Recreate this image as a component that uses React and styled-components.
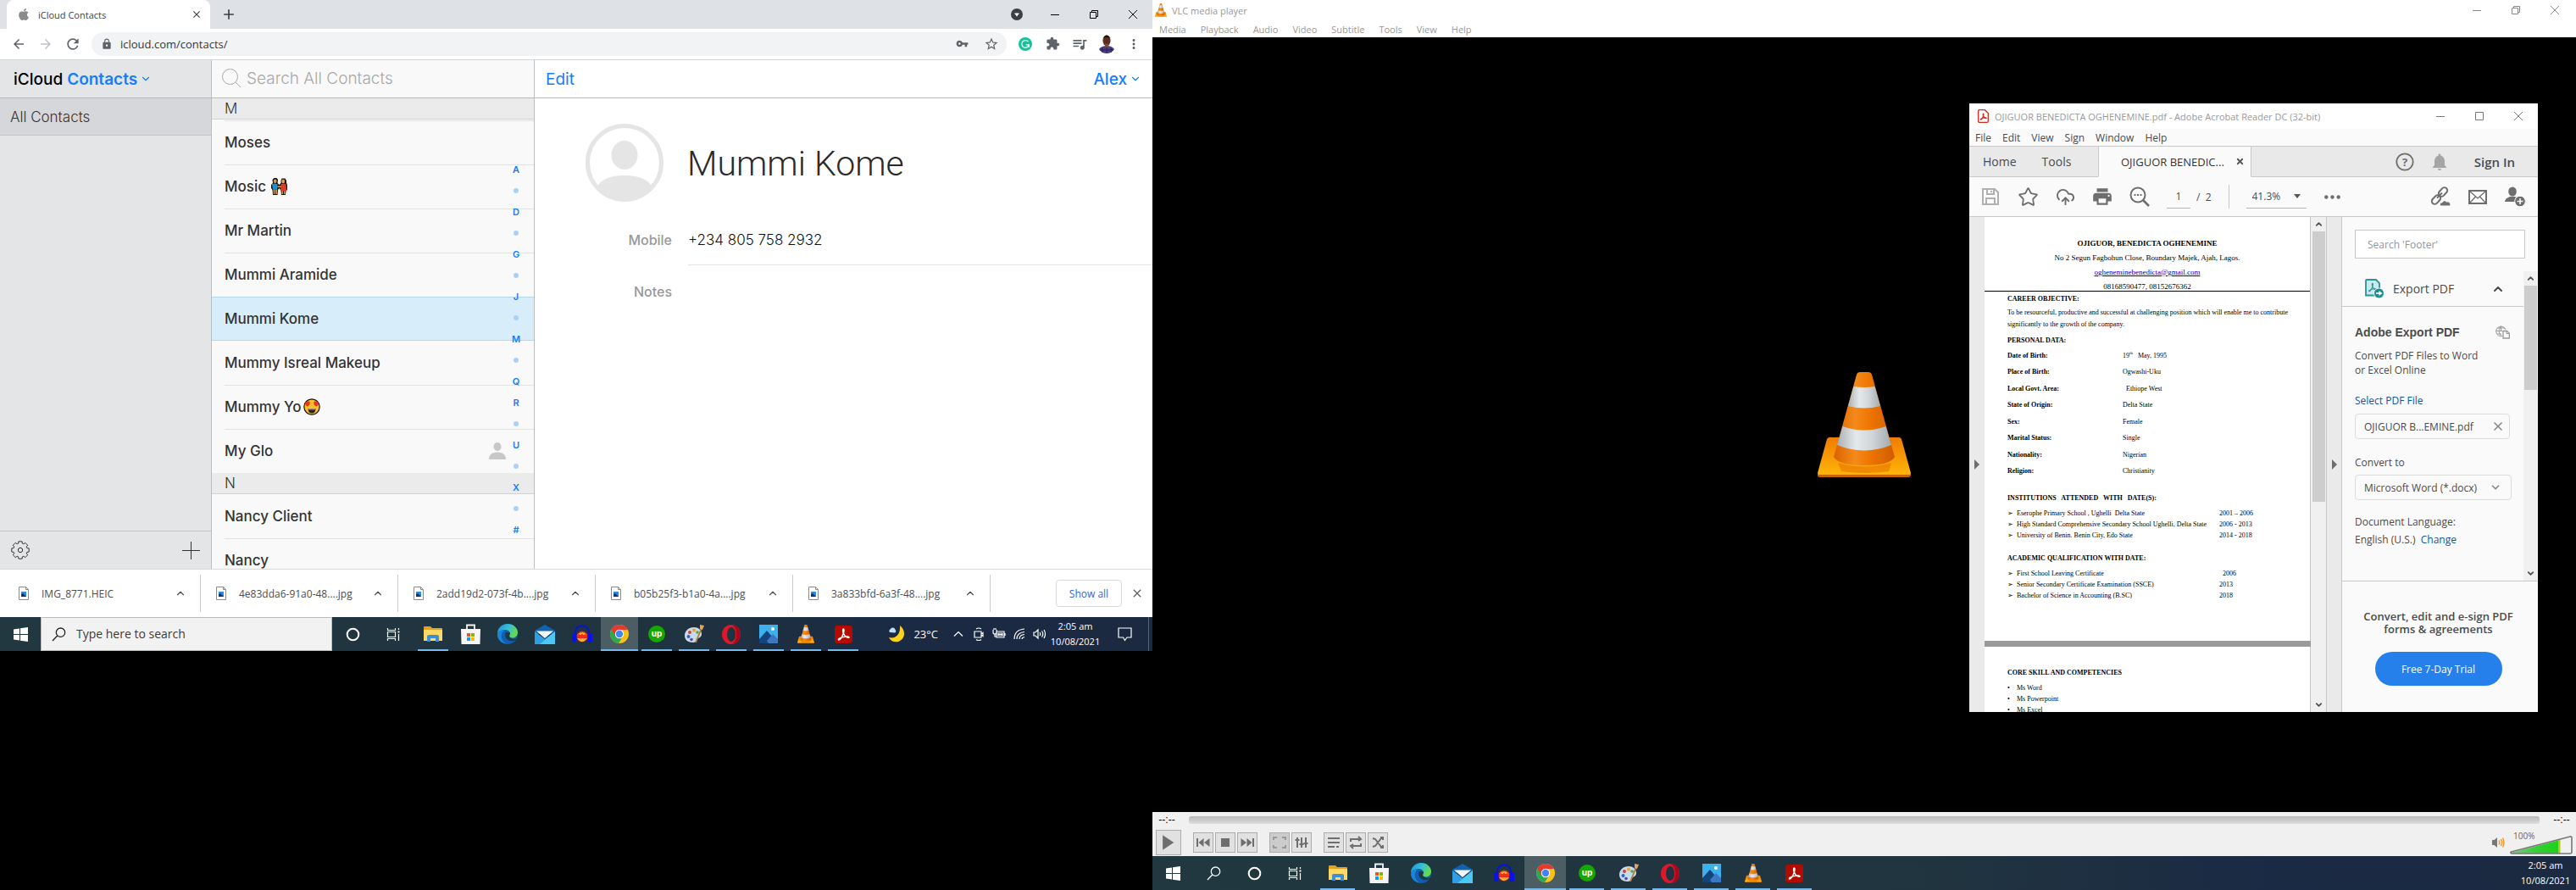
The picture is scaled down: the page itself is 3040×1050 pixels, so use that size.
import React from "react";
import styled, { createGlobalStyle, css } from "styled-components";
import {
  MdArrowBack, MdArrowForward, MdRefresh, MdLock, MdVpnKey, MdStarBorder,
  MdExtension, MdQueueMusic, MdMoreVert, MdClose, MdAdd, MdPrint, MdNotifications,
} from "react-icons/md";
import { FaApple } from "react-icons/fa";
import { ChevronUp, ChevronDown, Star, CloudUpload, X } from "lucide-react";

const UI = `"Open Sans", "Noto Sans", sans-serif`;
const SF = `Inter, Roboto, sans-serif`;
const SERIF = `"Liberation Serif", serif`;

const GlobalStyle = createGlobalStyle`
  *, *::before, *::after { box-sizing: border-box; }
  body { margin: 0; background: #000; font-family: ${UI}; }
  button, input, select { font: inherit; color: inherit; background: none; border: 0; padding: 0; margin: 0; border-radius: 0; outline: 0; }
  button { cursor: pointer; }
  h1, h2, h3, p, ul, table { margin: 0; padding: 0; }
  ul { list-style: none; }
  svg { display: block; flex: none; }
`;

/* ---------- shared ---------- */

const Desktop = styled.main`
  display: grid;
  grid-template-columns: 1360fr 1680fr;
  align-items: start;
  background: #000;
  min-height: 100vh;
`;

const Monitor = styled.section`
  display: flex;
  flex-direction: column;
  min-width: 0;
  overflow: hidden;
  aspect-ratio: ${(p) => p.$ratio};
`;

const IconButton = styled.button`
  display: flex;
  align-items: center;
  justify-content: center;
  width: ${(p) => p.$w || 32}px;
  height: ${(p) => p.$h || 28}px;
  flex: none;
  color: ${(p) => p.$color || "#5f6368"};
`;

const Spacer = styled.span`
  flex: 1;
`;

const Row = styled.div`
  display: flex;
  align-items: center;
  gap: ${(p) => p.$gap || 0}px;
`;

/* ---------- drawings ---------- */

const Cone = ({ w, h }) => (
  <svg width={w} height={h} viewBox="0 0 110 124" preserveAspectRatio="none" aria-hidden="true">
    <defs>
      <linearGradient id="coneBase" x1="0" y1="0" x2="0" y2="1">
        <stop offset="0" stopColor="#f07c00" />
        <stop offset="1" stopColor="#ffb50a" />
      </linearGradient>
      <linearGradient id="coneBody" x1="0" y1="0" x2="1" y2="0">
        <stop offset="0" stopColor="#d86400" />
        <stop offset=".35" stopColor="#f58a1c" />
        <stop offset=".6" stopColor="#ef7500" />
        <stop offset="1" stopColor="#cf5c00" />
      </linearGradient>
      <linearGradient id="coneBand" x1="0" y1="0" x2="1" y2="0">
        <stop offset="0" stopColor="#a9b0b3" />
        <stop offset=".35" stopColor="#e6e9ea" />
        <stop offset=".65" stopColor="#d0d5d7" />
        <stop offset="1" stopColor="#a2a9ad" />
      </linearGradient>
    </defs>
    <path d="M0 120 L110 120 L110 122 Q109 124 107 124 L3 124 Q0 124 0 122Z" fill="#c96500" />
    <path d="M14 77 L96 77 Q98 77 99 79 L110 119 Q110 121 108 121 L2 121 Q0 121 0 119 L11 79 Q12 77 14 77Z" fill="url(#coneBase)" />
    <path d="M24 107 Q55 116 87 107 L84 117 Q55 121 28 117Z" fill="#e87a00" opacity=".7" />
    <path d="M50 0 L60 0 Q63 0 64 3 L91 100 Q86 110 55 110 Q24 110 19 100 L46 3 Q47 0 50 0Z" fill="url(#coneBody)" />
    <path d="M42.500 17 Q55 19 67.500 17 L74 40 Q55 45 36 40Z" fill="url(#coneBand)" />
    <path d="M29.500 64 Q55 73 80.500 64 L87 86 Q55 99 23 86Z" fill="url(#coneBand)" />
  </svg>
);

const WindowsLogo = () => (
  <svg width="17" height="17" viewBox="0 0 17 17" fill="#fff" aria-hidden="true">
    <path d="M0 2.400L7 1.400V8H0zM8 1.300L17 0v8H8zM0 9h7v6.600L0 14.600zM8 9h9v8l-9-1.300z" />
  </svg>
);

const Magnifier = ({ size = 17, color = "#222" }) => (
  <svg width={size} height={size} viewBox="0 0 17 17" fill="none" stroke={color} strokeWidth="1.300" aria-hidden="true">
    <circle cx="10.500" cy="6.200" r="5.200" />
    <path d="M6.700 10L1 16" />
  </svg>
);

const Cortana = () => (
  <svg width="17" height="17" viewBox="0 0 17 17" aria-hidden="true">
    <circle cx="8.500" cy="8.500" r="6.800" fill="none" stroke="#fff" strokeWidth="2" />
  </svg>
);

const TaskView = () => (
  <svg width="17" height="17" viewBox="0 0 17 17" fill="none" stroke="#fff" strokeWidth="1.200" aria-hidden="true">
    <path d="M1.500 1v2.500h9V1M1.500 16v-2.500h9V16M1.500 5.500h9v6h-9zM14.500 1v2M14.500 8v8" />
    <path d="M13.500 4.500h2v2h-2z" fill="#fff" stroke="none" />
  </svg>
);

const Folder = () => (
  <svg width="22" height="20" viewBox="0 0 22 20" aria-hidden="true">
    <path d="M0 2q0-1 1-1h7l2 2h11q1 0 1 1v3H0z" fill="#e6a21c" />
    <path d="M0 5h22v13H0z" fill="#ffd968" />
    <path d="M4 19v-6q0-2 2-2h10q2 0 2 2v6h-4v-4H8v4z" fill="#3c8fd4" />
  </svg>
);

const StoreBag = () => (
  <svg width="23" height="24" viewBox="0 0 23 24" aria-hidden="true">
    <path d="M7 7V1.500h9V7" fill="none" stroke="#f3f3f3" strokeWidth="1.800" />
    <path d="M0 6h23l-.5 18H.5z" fill="#f5f5f5" />
    <path d="M7 11h4v4H7z" fill="#f25022" />
    <path d="M12 11h4v4h-4z" fill="#7fba00" />
    <path d="M7 16h4v4H7z" fill="#00a4ef" />
    <path d="M12 16h4v4h-4z" fill="#ffb900" />
  </svg>
);

const EdgeLogo = () => (
  <svg width="24" height="24" viewBox="0 0 24 24" aria-hidden="true">
    <defs>
      <linearGradient id="edgeTop" x1="0" y1="0" x2="1" y2=".4">
        <stop offset="0" stopColor="#1b8fdc" />
        <stop offset=".55" stopColor="#35c1d8" />
        <stop offset="1" stopColor="#66d84e" />
      </linearGradient>
    </defs>
    <circle cx="12" cy="12" r="12" fill="#0f5fb4" />
    <path d="M0 12C0 5 5 0 12 0s12 5 12 10c0 4-3 6.500-6 6.500-2.500 0-4-1-4-2 0-.8 1-1 1-3C15 9 12.500 7 9 7c-5 0-9 3-9 5z" fill="url(#edgeTop)" />
    <path d="M8 8c-3 2-4 5-3 9 1 3 3 5.500 6 6.500C5 23 0 18.500 0 12.500 1 9 4 7 8 8z" fill="#1a86d9" />
    <path d="M10 10c-2 4 0 9 5 10 3 .6 5.500-.3 7.500-1.500l1.500-1.500c-3 1.500-10 1-10-3.500 0-1 1-1.500 1-3z" fill="#213840" />
  </svg>
);

const MailApp = () => (
  <svg width="24" height="24" viewBox="0 0 24 24" aria-hidden="true">
    <path d="M0 8L12 1l12 7v4H0z" fill="#0f63b0" />
    <path d="M0 9l12 9 12-9v15H0z" fill="#2f9fe3" />
    <path d="M24 9L6 24h18z" fill="#4bc8f4" />
    <path d="M2 8.500h20L12 17z" fill="#f2f6f9" />
  </svg>
);

const Audacity = () => (
  <svg width="24" height="22" viewBox="0 0 24 22" aria-hidden="true">
    <path d="M4 12C3 5 7 1.500 12 1.500S21 5 20 12" fill="none" stroke="#0a12d8" strokeWidth="2" />
    <circle cx="12" cy="14" r="6.500" fill="#e8281a" />
    <path d="M6 12q6-6 12 0zM6 16q6 8 12 0z" fill="#f6b53a" />
    <path d="M6 14l2-2 2 3 2-3 2 3 2-3 2 2" fill="none" stroke="#ff2a12" strokeWidth="2" />
    <rect x="0" y="10" width="5.500" height="11" rx="2.700" fill="#0a10f0" />
    <rect x="18.500" y="10" width="5.500" height="11" rx="2.700" fill="#0a10f0" />
  </svg>
);

const ChromeLogo = () => (
  <svg width="22" height="22" viewBox="0 0 22 22" aria-hidden="true">
    <circle cx="11" cy="11" r="11" fill="#fbc116" />
    <path d="M1.500 5.500A11 11 0 0 0 10 22L15.500 13 11 11z" fill="#2da94f" />
    <path d="M1.500 5.500L6.200 13.500 11 11V6h9.700A11 11 0 0 0 1.500 5.500z" fill="#e33b2e" />
    <circle cx="11" cy="11" r="5.200" fill="#fff" />
    <circle cx="11" cy="11" r="4.200" fill="#4285f4" />
  </svg>
);

const Upwork = () => (
  <svg width="20" height="20" viewBox="0 0 20 20" aria-hidden="true">
    <circle cx="10" cy="10" r="10" fill="#14a800" />
    <text x="10" y="13" textAnchor="middle" fontFamily="Inter, sans-serif" fontWeight="700" fontSize="10" fill="#fff">up</text>
  </svg>
);

const Palette = () => (
  <svg width="24" height="24" viewBox="0 0 24 24" aria-hidden="true">
    <path d="M1 14C1 8 6 4 12 4c5 0 9 3 9 8 0 3-2 4-4 5s-1 5-6 5C5 22 1 19 1 14z" fill="#c6dcea" />
    <circle cx="7" cy="10" r="2" fill="#d84032" />
    <circle cx="12" cy="7.500" r="2" fill="#e9a23a" />
    <circle cx="16" cy="10" r="1.800" fill="#54a844" />
    <circle cx="5.500" cy="15" r="2" fill="#2d62c8" />
    <circle cx="9" cy="18.500" r="1.800" fill="#6a3da8" />
    <path d="M21 5l-7 17" stroke="#b9763c" strokeWidth="1.800" />
    <path d="M19 1l5 1-2 5-3-1z" fill="#dca466" />
  </svg>
);

const Opera = () => (
  <svg width="22" height="23" viewBox="0 0 22 23" aria-hidden="true">
    <ellipse cx="11" cy="11.500" rx="11" ry="11.500" fill="#e0162b" />
    <path d="M11 0c7 0 11 5 11 11.500S17 23 11 23c4-1 6-6 6-11.500S15 1 11 0z" fill="#a30a1c" />
    <ellipse cx="11" cy="11.500" rx="5" ry="8.500" fill="#1e3440" />
  </svg>
);

const Photos = () => (
  <svg width="22" height="22" viewBox="0 0 22 22" aria-hidden="true">
    <rect width="22" height="22" fill="#3db0ee" />
    <path d="M0 17L9 7l13 15H0z" fill="#15437c" />
    <path d="M9 19l7-8 6 6v5H11z" fill="#3c78c4" />
    <circle cx="16" cy="5" r="2" fill="#fff" />
  </svg>
);

const Trefoil = ({ color, width = 1.4 }) => (
  <path
    d="M4.500 16.200c1.500.6 4.300-4.200 5.400-7.700.8-2.600.8-4.600 0-4.600s-1.100 1.800-.2 4.300c1 2.600 3.400 5.500 5.700 5.500 1.300 0 1.200-1.200-.8-1.400-3-.2-8 1.200-9.600 2.400-.8.600-1 1.200-.5 1.500z"
    fill="none" stroke={color} strokeWidth={width} strokeLinejoin="round"
  />
);

const AcrobatApp = () => (
  <svg width="21" height="21" viewBox="0 0 20 20" aria-hidden="true">
    <rect width="20" height="20" rx="3" fill="#b30b00" />
    <Trefoil color="#fff" />
  </svg>
);

const AcrobatDoc = () => (
  <svg width="13" height="16" viewBox="0 0 13 16" aria-hidden="true">
    <path d="M2 .7h6.500l3.800 3.800V14q0 1.300-1.300 1.300H2Q.7 15.300.7 14V2Q.7.700 2 .7z" fill="#fff" stroke="#d7261c" strokeWidth="1.300" />
    <g transform="translate(.8 2.800) scale(.58)"><Trefoil color="#d7261c" width={2} /></g>
  </svg>
);

const ExportDoc = () => (
  <svg width="23" height="23" viewBox="0 0 23 23" aria-hidden="true">
    <path d="M2 1h11l4 4v14.500H1V2q0-1 1-1z" fill="#c9e9ea" stroke="#26949a" strokeWidth="1.800" />
    <g transform="translate(1.500 2.500) scale(.75)"><Trefoil color="#26949a" width={1.5} /></g>
    <circle cx="16.500" cy="17" r="6" fill="#1f8c92" stroke="#fafafa" />
    <path d="M13 17h5.500" stroke="#fff" strokeWidth="1.600" />
    <path d="M16.500 14l4 3-4 3z" fill="#fff" />
  </svg>
);

const GlobeDoc = () => (
  <svg width="17" height="16" viewBox="0 0 17 16" fill="none" stroke="#9a9a9a" aria-hidden="true">
    <path d="M8 12.500A5.800 5.800 0 1 1 12 5M.5 6.500h8M6.500.7c-3 3-3 8 0 11.500M6.500.7v6M2 3h9M2 10h5" />
    <path d="M9 6.500h4.500l2.800 2.800V15H9z" fill="#fafafa" strokeWidth="1.300" />
    <path d="M13 6.500v3h3" />
  </svg>
);

const MoonCloud = () => (
  <svg width="20" height="20" viewBox="0 0 20 20" aria-hidden="true">
    <path d="M14 0c7 5 7 16-2 19-5 1.300-9-1-11-5 8 2 14-4 13-14z" fill="#fbd21b" />
    <path d="M2 8a2.500 2.500 0 0 1 1-4 3 3 0 0 1 5.500 1A2 2 0 0 1 8 8.500z" fill="#b8dff5" />
  </svg>
);

const gearPoints = () => {
  const pts = [];
  for (let i = 0; i < 8; i += 1) {
    const a = (i * Math.PI) / 4;
    [[-0.3, 8.2], [-0.2, 10.4], [0.2, 10.4], [0.3, 8.2]].forEach(([d, r]) => {
      pts.push(`${(11 + r * Math.sin(a + d)).toFixed(2)},${(11 - r * Math.cos(a + d)).toFixed(2)}`);
    });
  }
  return pts.join(" ");
};

const Gear = () => (
  <svg width="22" height="22" viewBox="0 0 22 22" fill="none" stroke="#333" strokeLinejoin="round" aria-hidden="true">
    <polygon points={gearPoints()} />
    <circle cx="11" cy="11" r="2.700" />
  </svg>
);

const ThinPlus = () => (
  <svg width="21" height="21" viewBox="0 0 21 21" stroke="#333" aria-hidden="true">
    <path d="M10.500 0v21M0 10.500h21" />
  </svg>
);

const AvatarLarge = () => (
  <svg width="92" height="92" viewBox="0 0 92 92" role="img" aria-label="No photo">
    <circle cx="46" cy="46" r="43.500" fill="#fff" stroke="#e5e5e5" strokeWidth="5" />
    <ellipse cx="46" cy="37" rx="15.500" ry="17" fill="#e5e5e5" />
    <path d="M14 74C19 65 30 61 46 61s27 4 32 13C70 85 58 90 46 90S22 85 14 74z" fill="#e5e5e5" />
  </svg>
);

const PersonSmall = () => (
  <svg width="20" height="20" viewBox="0 0 20 20" fill="#c8c8c8" aria-hidden="true">
    <ellipse cx="10" cy="5" rx="4.500" ry="5" />
    <path d="M0 20c0-5 3-8.500 10-8.500S20 15 20 20z" />
  </svg>
);

const Couple = () => (
  <svg width="19" height="20" viewBox="0 0 19 20" role="img" aria-label="man and woman holding hands">
    <path d="M0 8l2-2-.5-4L3.500 0h3L8 2l-.5 4 2 2 2-2V3l1-2.500h4L18 3v3l1 2v6l-1.500 1L17 20h-5l-.5-5-2-3-1.500 2-.5 6H2l-.5-6L0 12z" fill="#1c120c" />
    <ellipse cx="4.700" cy="3.800" rx="1.900" ry="2.200" fill="#d99c52" />
    <ellipse cx="14.200" cy="4" rx="1.900" ry="2.200" fill="#e0a458" />
    <path d="M12.300 3q2-3 4 0v-1.500h-4z" fill="#a5471e" />
    <path d="M1 7.200Q4.500 6 7.500 7.200L7.200 13.500H2z" fill="#1f8ed6" />
    <path d="M11.500 7.200q3-1.200 6 0l.8 8h-7.300z" fill="#e03a24" />
    <path d="M7.500 9.500h4V11h-4z" fill="#e8ac2c" />
    <path d="M2.500 13.500h1.900v5.500H2.800zM5 13.500h1.900v5.500H5.300zM12.500 15.200H14V19h-1.500zM15 15.200h1.500V19H15z" fill="#dc9c3c" />
  </svg>
);

const HeartEyes = () => (
  <svg width="20" height="20" viewBox="0 0 20 20" role="img" aria-label="smiling face with heart-eyes">
    <circle cx="10" cy="10" r="9.200" fill="#fcbf2c" stroke="#1b1208" strokeWidth="1.200" />
    <path d="M2 6q0-2.500 2.300-1.700Q6.500 2.500 7.800 5q0 3-3 4.500Q2 8.500 2 6zM18 6q0-2.500-2.300-1.700Q13.500 2.500 12.200 5q0 3 3 4.500Q18 8.500 18 6z" fill="#e8331c" />
    <path d="M5.500 12h9q0 5.500-4.500 5.500T5.500 12z" fill="#33210f" />
    <path d="M6 12h8v1.500H6z" fill="#8d8d86" />
  </svg>
);

const Portrait = () => (
  <svg width="20" height="22" viewBox="0 0 20 22" role="img" aria-label="Profile">
    <path d="M1 17q3-4 9-4t9 4q-3 5-9 5t-9-5z" fill="#4b3f86" />
    <path d="M5 15v6M10 14v8M15 15v6M2 18h16" stroke="#221c48" strokeWidth=".8" />
    <ellipse cx="10" cy="7" rx="4.500" ry="6.500" fill="#5a2f22" />
    <path d="M5.500 4Q10-3 14.500 4 10 2 5.500 4z" fill="#1c0f0b" />
    <path d="M8 10q2 1.500 4 0v5H8z" fill="#7c4633" />
  </svg>
);

const Grammarly = () => (
  <svg width="16" height="16" viewBox="0 0 16 16" aria-hidden="true">
    <circle cx="8" cy="8" r="8" fill="#15c39a" />
    <path d="M11.500 5.200A4.300 4.300 0 1 0 12.300 9M12.300 12V8.800H8.800" fill="none" stroke="#fff" strokeWidth="1.300" />
  </svg>
);

const FileThumb = () => (
  <svg width="12" height="16" viewBox="0 0 12 16" aria-hidden="true">
    <path d="M.5.500h8l3 3v12H.5z" fill="#fff" stroke="#8c8c8c" />
    <path d="M8.500.5v3h3" fill="none" stroke="#8c8c8c" />
    <path d="M3 6h6v6H3z" fill="#2b8be0" />
    <path d="M3 12V9l2-1 4 4z" fill="#0c3768" />
  </svg>
);

const GlyphMin = ({ color = "#000", size = 10 }) => (
  <svg width={size} height="10" viewBox="0 0 10 10" stroke={color} aria-hidden="true"><path d="M0 5.500h10" /></svg>
);
const GlyphRestore = ({ color = "#000" }) => (
  <svg width="10" height="10" viewBox="0 0 10 10" fill="none" stroke={color} aria-hidden="true">
    <path d="M.5 2.500h7v7h-7zM2.500 2.500v-2h7v7h-2" />
  </svg>
);
const GlyphMax = ({ color = "#777" }) => (
  <svg width="10" height="10" viewBox="0 0 10 10" fill="none" stroke={color} aria-hidden="true"><path d="M.5.500h9v9h-9z" /></svg>
);
const GlyphClose = ({ color = "#000" }) => (
  <svg width="10" height="10" viewBox="0 0 10 10" fill="none" stroke={color} aria-hidden="true"><path d="M0 0l10 10M10 0L0 10" /></svg>
);

/* ---------- taskbar ---------- */

const Bar = styled.footer`
  display: flex;
  align-items: stretch;
  flex: none;
  height: 40px;
  background: linear-gradient(90deg, #213840, #20343f 55%, #1b2a44 78%, #1b2941);
  color: #fff;
`;

const Tile = styled.button`
  display: flex;
  align-items: center;
  justify-content: center;
  flex: none;
  width: ${(p) => p.$w}px;
  position: relative;
  ${(p) => p.$focused && css`background: #4d5d64;`}
  &::after {
    content: "";
    position: absolute;
    bottom: 0;
    left: ${(p) => (p.$focused ? 0 : 4)}px;
    right: ${(p) => (p.$focused ? 0 : 4)}px;
    height: 2px;
    background: ${(p) => (p.$open ? "#76b9ed" : "transparent")};
  }
`;

const Apps = styled.nav`
  display: flex;
  padding-left: ${(p) => p.$pad || 0}px;
`;

const TaskSearch = styled.label`
  display: flex;
  align-items: center;
  gap: 12px;
  width: 344px;
  padding: 0 12px;
  background: #f2f2f2;
  border: 1px solid #b9bcbe;
  color: #2b2b2b;
  input { flex: 1; min-width: 0; font-size: 14px; line-height: 20px; }
  input::placeholder { color: #3a3a3a; opacity: 1; }
`;

const Clock = styled.button`
  width: ${(p) => p.$w}px;
  font-size: 11px;
  line-height: 18px;
  text-align: center;
  white-space: nowrap;
  color: #fff;
`;

const Weather = styled.button`
  display: flex;
  align-items: center;
  gap: 10px;
  margin-right: 12px;
  font-size: 13px;
`;

const ShowDesktop = styled.button`
  width: 5px;
  border-left: 1px solid #5b6778;
`;

const APPS = [
  ["File Explorer", Folder, true], ["Microsoft Store", StoreBag], ["Microsoft Edge", EdgeLogo],
  ["Mail", MailApp], ["Audacity", Audacity], ["Google Chrome", ChromeLogo, true, true],
  ["Upwork", Upwork, true], ["Paint", Palette, true], ["Opera", Opera, true],
  ["Photos", Photos, true], ["VLC", null, true], ["Acrobat Reader", AcrobatApp, true],
];

const AppTiles = ({ width, pad }) => (
  <Apps $pad={pad} aria-label="Pinned apps">
    {APPS.map(([name, Icon, open, focused]) => (
      <Tile key={name} $w={width} $open={open} $focused={focused} aria-label={name}>
        {Icon ? <Icon /> : <Cone w={20} h={22} />}
      </Tile>
    ))}
  </Apps>
);

const TrayStroke = ({ d, w = 16, label }) => (
  <IconButton $w={24} $h={40} $color="#fff" aria-label={label}>
    <svg width={w} height="16" viewBox={`0 0 ${w} 16`} fill="none" stroke="currentColor" strokeWidth="1.200"><path d={d} /></svg>
  </IconButton>
);

/* ---------- Chrome ---------- */

const TabStrip = styled.div`
  display: flex;
  align-items: flex-end;
  flex: none;
  height: 34px;
  padding-left: 8px;
  background: #dee1e6;
`;

const BrowserTab = styled.div`
  display: flex;
  align-items: center;
  width: 240px;
  height: 34px;
  padding: 0 6px 0 12px;
  gap: 9px;
  border-radius: 8px 8px 0 0;
  background: #fff;
  font-size: 11px;
  color: #3c4043;
  span { flex: 1; }
`;

const WindowButtons = styled.div`
  display: flex;
  align-items: center;
  height: ${(p) => p.$h}px;
`;

const Toolbar = styled.div`
  display: flex;
  align-items: center;
  flex: none;
  height: 37px;
  padding: 0 6px 1px;
  background: #fff;
  border-bottom: 1px solid #d5d8db;
`;

const Omnibox = styled.div`
  display: flex;
  align-items: center;
  flex: 1;
  height: 28px;
  margin: 0 6px;
  padding: 0 6px 0 11px;
  gap: 9px;
  border-radius: 14px;
  background: #f1f3f4;
  color: #5f6368;
  input { flex: 1; font-size: 13px; color: #33363a; }
`;

const DownloadBar = styled.div`
  display: flex;
  align-items: center;
  flex: none;
  height: 57px;
  padding: 0 6px 0 4px;
  border-top: 1px solid #d9d9d9;
  background: #fff;
`;

const Download = styled.div`
  display: flex;
  align-items: center;
  width: 233px;
  height: 44px;
  padding: 0 16px 0 18px;
  gap: 15px;
  border-right: 1px solid #ccc;
  font-size: 12px;
  color: #4a4d51;
  button:first-of-type { flex: 1; display: flex; align-items: center; gap: 15px; white-space: nowrap; }
`;

const ShowAll = styled.button`
  width: 78px;
  height: 32px;
  margin-right: 6px;
  border: 1px solid #d6d9dd;
  border-radius: 4px;
  font-size: 12px;
  color: #2f67d8;
`;

/* ---------- iCloud ---------- */

const ICloud = styled.div`
  display: flex;
  flex: 1;
  min-height: 0;
  background: #fff;
  font-family: ${SF};
  color: #333;
`;

const Sidebar = styled.aside`
  display: flex;
  flex-direction: column;
  width: 250px;
  background: #e4e5e7;
  border-right: 1px solid #bcbec1;
`;

const HeaderBar = styled.header`
  display: flex;
  align-items: center;
  justify-content: ${(p) => (p.$between ? "space-between" : "flex-start")};
  flex: none;
  height: 45px;
  padding: 0 ${(p) => p.$px || 16}px;
  border-bottom: 1px solid #a6bccd;
`;

const Brand = styled.h1`
  display: flex;
  align-items: center;
  font-size: 19px;
  font-weight: 500;
  color: #000;
  button { display: flex; align-items: center; gap: 3px; margin-left: 5px; color: #147efb; font-weight: 600; }
`;

const Group = styled.button`
  height: 44px;
  padding: 0 12px;
  text-align: left;
  font-size: 17px;
  font-weight: 300;
  color: #333;
  background: #d6d7da;
  border-bottom: 1px solid #c3c4c7;
`;

const SidebarFooter = styled.div`
  display: flex;
  align-items: center;
  justify-content: space-between;
  height: 45px;
  margin-top: auto;
  padding: 0 13px;
  border-top: 1px solid #c3c4c7;
`;

const ListPane = styled.div`
  position: relative;
  display: flex;
  flex-direction: column;
  width: 381px;
  background: #f9f9f9;
  border-right: 1px solid #bcbec1;
`;

const ContactSearch = styled.label`
  display: flex;
  align-items: center;
  gap: 6px;
  flex: none;
  height: 45px;
  padding: 0 12px 2px;
  border-bottom: 1px solid #a6bccd;
  input { flex: 1; font-size: 19px; font-weight: 300; }
  input::placeholder { color: #a8a8a8; opacity: 1; }
`;

const Scroller = styled.div`
  flex: 1;
  min-height: 0;
  overflow: hidden;
`;

const Letter = styled.h2`
  height: 25px;
  padding-left: 15px;
  font-size: 17px;
  line-height: 24px;
  font-weight: 300;
  background: #ebebeb;
  border-bottom: 1px solid #d2d2d2;
`;

const Contact = styled.button`
  display: flex;
  align-items: center;
  justify-content: space-between;
  width: 100%;
  height: 52px;
  padding: 0 33px 0 15px;
  font-size: 17px;
  font-weight: 500;
  text-align: left;
  background: ${(p) => (p.$on ? "#d7edfa" : "none")};
  box-shadow: ${(p) => (p.$on ? "inset 0 1px #b4d9ea, inset 0 -1px #b4d9ea" : "none")};
  background-image: ${(p) => (p.$line ? "linear-gradient(#e2e2e2, #e2e2e2)" : "none")};
  background-size: 100% 1px;
  background-position: 15px 0;
  background-repeat: no-repeat;
`;

const People = styled.ul`
  padding-top: ${(p) => p.$pt || 0}px;
`;

const IndexStrip = styled.nav`
  position: absolute;
  top: 116px;
  right: 14px;
  display: flex;
  flex-direction: column;
  a {
    display: flex;
    align-items: center;
    justify-content: center;
    width: 14px;
    height: 25px;
    font-size: 11px;
    font-weight: 600;
    color: #147efb;
    text-decoration: none;
  }
  i { width: 6px; height: 6px; border-radius: 50%; background: #aecff6; }
`;

const Detail = styled.article`
  flex: 1;
  min-width: 0;
`;

const BlueButton = styled.button`
  display: flex;
  align-items: center;
  gap: 3px;
  font-size: 19px;
  font-weight: ${(p) => p.$weight || 400};
  color: #147efb;
`;

const Person = styled.div`
  display: flex;
  align-items: center;
  gap: 28px;
  padding: 30px 0 22px 60px;
  h2 { padding-top: 2px; font-size: 41px; line-height: 48px; font-family: Roboto, sans-serif; font-weight: 300; color: #2a2a2a; }
`;

const Field = styled.div`
  display: grid;
  grid-template-columns: 162px 1fr;
  column-gap: 19px;
  b { text-align: right; font-size: 16px; font-weight: 500; color: #999; }
  span { height: ${(p) => (p.$line ? 53 : 60)}px; font-size: 17px; font-weight: 300; color: #111; border-bottom: ${(p) => (p.$line ? "1px solid #e3e3e3" : "0")}; }
  b, span { padding-top: ${(p) => (p.$line ? 12 : 20)}px; line-height: 22px; }
`;

const TOP = ["Moses", "Mosic", "Mr Martin", "Mummi Aramide", "Mummi Kome", "Mummy Isreal Makeup", "Mummy Yo", "My Glo"];
const INDEX = ["A", "", "D", "", "G", "", "J", "", "M", "", "Q", "R", "", "U", "", "X", "", "#"];
const FILES = ["IMG_8771.HEIC", "4e83dda6-91a0-48....jpg", "2add19d2-073f-4b....jpg", "b05b25f3-b1a0-4a....jpg", "3a833bfd-6a3f-48....jpg"];

const ChromeWindow = () => (
  <>
    <TabStrip>
      <BrowserTab>
        <FaApple size={16} color="#8b8b8b" />
        <span>iCloud Contacts</span>
        <IconButton $w={20} $h={20} $color="#3c4043" aria-label="Close tab"><MdClose size={14} /></IconButton>
      </BrowserTab>
      <IconButton $w={44} $h={34} $color="#3c4043" aria-label="New tab"><MdAdd size={20} /></IconButton>
      <Spacer />
      <IconButton $w={44} $h={34} aria-label="Search tabs">
        <svg width="14" height="14" viewBox="0 0 14 14"><circle cx="7" cy="7" r="7" fill="#3c4043" /><path d="M4 5.500h6L7 9.500z" fill="#fff" /></svg>
      </IconButton>
      <WindowButtons $h={34}>
        <IconButton $w={46} aria-label="Minimise"><GlyphMin /></IconButton>
        <IconButton $w={46} aria-label="Restore"><GlyphRestore /></IconButton>
        <IconButton $w={46} aria-label="Close"><GlyphClose /></IconButton>
      </WindowButtons>
    </TabStrip>
    <Toolbar>
      <IconButton aria-label="Back"><MdArrowBack size={18} /></IconButton>
      <IconButton $color="#bdc1c6" aria-label="Forward"><MdArrowForward size={18} /></IconButton>
      <IconButton aria-label="Reload"><MdRefresh size={20} /></IconButton>
      <Omnibox>
        <MdLock size={14} />
        <input aria-label="Address" defaultValue="icloud.com/contacts/" />
        <IconButton $w={28} aria-label="Passwords"><MdVpnKey size={15} /></IconButton>
        <IconButton $w={24} aria-label="Bookmark"><MdStarBorder size={18} /></IconButton>
      </Omnibox>
      <IconButton aria-label="Grammarly"><Grammarly /></IconButton>
      <IconButton aria-label="Extensions"><MdExtension size={17} /></IconButton>
      <IconButton aria-label="Media"><MdQueueMusic size={20} /></IconButton>
      <IconButton aria-label="Profile"><Portrait /></IconButton>
      <IconButton aria-label="Menu"><MdMoreVert size={18} /></IconButton>
    </Toolbar>
    <ICloud>
      <Sidebar>
        <HeaderBar>
          <Brand>iCloud<button>Contacts <ChevronDown size={14} strokeWidth={2} /></button></Brand>
        </HeaderBar>
        <Group>All Contacts</Group>
        <SidebarFooter>
          <button aria-label="Settings"><Gear /></button>
          <button aria-label="Add"><ThinPlus /></button>
        </SidebarFooter>
      </Sidebar>
      <ListPane>
        <ContactSearch>
          <svg width="23" height="23" viewBox="0 0 23 23" fill="none" stroke="#a8a8a8" aria-hidden="true"><circle cx="9.500" cy="9.500" r="9" /><path d="M16 16l6 6" /></svg>
          <input aria-label="Search contacts" placeholder="Search All Contacts" />
        </ContactSearch>
        <Scroller>
          <Letter>M</Letter>
          <People $pt={1}>
            {TOP.map((name) => (
              <li key={name}>
                <Contact $on={name === "Mummi Kome"} $line={!["Mummi Kome", "Mummy Isreal Makeup"].includes(name)}>
                  <Row $gap={name === "Mosic" ? 6 : 2}>
                    {name}
                    {name === "Mosic" && <Couple />}
                    {name === "Mummy Yo" && <HeartEyes />}
                  </Row>
                  {name === "My Glo" && <PersonSmall />}
                </Contact>
              </li>
            ))}
          </People>
          <Letter>N</Letter>
          <People>
            <li><Contact>Nancy Client</Contact></li>
            <li><Contact $line>Nancy</Contact></li>
          </People>
        </Scroller>
        <IndexStrip aria-label="Alphabet">
          {INDEX.map((c, i) => <a key={i} href="#list">{c || <i />}</a>)}
        </IndexStrip>
      </ListPane>
      <Detail>
        <HeaderBar $px={13} $between>
          <BlueButton>Edit</BlueButton>
          <BlueButton $weight={500}>Alex <ChevronDown size={14} /></BlueButton>
        </HeaderBar>
        <Person><AvatarLarge /><h2>Mummi Kome</h2></Person>
        <Field $line><b>Mobile</b><span>+234 805 758 2932</span></Field>
        <Field><b>Notes</b><span /></Field>
      </Detail>
    </ICloud>
    <DownloadBar>
      {FILES.map((f) => (
        <Download key={f}>
          <button><FileThumb />{f}</button>
          <button aria-label="Options"><ChevronUp size={14} /></button>
        </Download>
      ))}
      <Spacer />
      <ShowAll>Show all</ShowAll>
      <IconButton $w={24} aria-label="Close downloads"><MdClose size={16} /></IconButton>
    </DownloadBar>
  </>
);

/* ---------- VLC ---------- */

const VlcTitle = styled.header`
  display: flex;
  align-items: center;
  height: 24px;
  padding: 0 2px 0 3px;
  gap: 6px;
  font-size: 11px;
  background: #fff;
  color: #999;
`;

const Menu = styled.nav`
  display: flex;
  align-items: center;
  flex: none;
  height: 20px;
  padding-left: ${(p) => p.$pl}px;
  gap: ${(p) => p.$gap}px;
  font-size: ${(p) => p.$size}px;
  color: ${(p) => p.$color};
  background: ${(p) => p.$bg};
`;

const Video = styled.div`
  position: relative;
  display: flex;
  flex: 1;
  align-items: center;
  justify-content: center;
  background: #000;
`;

const Controls = styled.div`
  flex: none;
  height: 52px;
  padding: 0 4px;
  background: #f0f0f0;
`;

const SeekRow = styled.div`
  display: flex;
  align-items: center;
  justify-content: space-between;
  height: 18px;
  padding: 0 3px;
  gap: 16px;
  font: 12px/16px "Liberation Sans", sans-serif;
  color: #000;
  input {
    appearance: none;
    flex: 1;
    height: 9px;
    border-radius: 3px;
    background: linear-gradient(#b9b9b9, #dcdcdc);
  }
  input::-webkit-slider-thumb { appearance: none; width: 0; height: 0; }
  span { width: 20px; text-align: center; white-space: nowrap; }
`;

const ControlRow = styled.div`
  display: flex;
  align-items: center;
  height: 34px;
  padding-top: 2px;
  gap: 14px;
`;

const PlayerButton = styled.button`
  display: flex;
  align-items: center;
  justify-content: center;
  width: ${(p) => (p.$big ? 30 : 24)}px;
  height: ${(p) => (p.$big ? 30 : 24)}px;
  border: 1px solid #adadad;
  background: ${(p) => (p.$off ? "#ccc" : "#e1e1e1")};
  color: ${(p) => (p.$off ? "#9a9a9a" : "#6e6e6e")};
`;

const VolumeBox = styled.label`
  display: grid;
  width: 74px;
  height: 28px;
  > * { grid-area: 1 / 1; }
  span { font-size: 10px; line-height: 13px; padding-left: 4px; color: #666; }
  svg { align-self: end; }
  input { appearance: none; opacity: 0; width: 100%; }
`;

const Glyph = ({ d, s = 16, stroke }) => (
  <svg width={s} height={s} viewBox="0 0 16 16" fill={stroke ? "none" : "currentColor"} stroke={stroke ? "currentColor" : "none"} strokeWidth="2" aria-hidden="true">
    <path d={d} />
  </svg>
);

/* ---------- Acrobat ---------- */

const AcroWindow = styled.section`
  position: absolute;
  top: 78px;
  right: 45px;
  display: flex;
  flex-direction: column;
  width: 671px;
  height: 718px;
  overflow: hidden;
  background: #fafafa;
  color: #4b4b4b;
`;

const AcroTitle = styled.header`
  display: flex;
  align-items: center;
  flex: none;
  height: 30px;
  padding-left: 10px;
  gap: 7px;
  font-size: 11px;
  background: #fff;
  color: #999;
  span { white-space: nowrap; }
`;

const AcroTabs = styled.div`
  display: flex;
  align-items: stretch;
  flex: none;
  height: 37px;
  border-top: 1px solid #c8c8c8;
  background: #e9e9e9;
  > * { border-bottom: 1px solid #c8c8c8; }
`;

const TabNav = styled.nav`
  display: flex;
  width: 152px;
  padding-left: 16px;
  gap: 30px;
  font-size: 14px;
`;

const DocTab = styled.div`
  display: flex;
  align-items: center;
  justify-content: space-between;
  width: 181px;
  padding: 0 6px 0 26px;
  background: #fafafa;
  border: 1px solid #c8c8c8;
  border-width: 0 1px 1px;
  border-bottom-color: #fafafa;
  font-size: 13px;
  color: #333;
`;

const AcroRight = styled.div`
  display: flex;
  align-items: center;
  flex: 1;
  justify-content: flex-end;
  padding-right: 27px;
  gap: 9px;
  font-size: 15px;
  font-weight: 600;
  > button:last-child { margin-left: 16px; }
`;

const AcroTools = styled.div`
  display: flex;
  align-items: center;
  flex: none;
  height: 47px;
  padding: 0 5px 0 3px;
  border-bottom: 1px solid #c8c8c8;
  font-size: 12px;
`;

const PageInput = styled.input`
  width: 28px;
  height: 27px;
  margin: 0 7px 0 9px;
  text-align: center;
  border-bottom: 1px solid #b5b5b5;
`;

const Rule = styled.span`
  width: 1px;
  height: 28px;
  margin: 0 20px;
  background: #c8c8c8;
`;

const SelectBox = styled.div`
  display: grid;
  align-items: center;
  width: ${(p) => p.$w}px;
  height: ${(p) => p.$h}px;
  > * { grid-area: 1 / 1; }
  select { appearance: none; width: 100%; height: 100%; padding-left: ${(p) => p.$pl}px; }
  svg { justify-self: end; margin-right: ${(p) => p.$mr}px; pointer-events: none; }
  ${(p) => (p.$boxed
    ? css`border: 1px solid #dcdcdc; border-radius: 4px;`
    : css`border-bottom: 1px solid #b5b5b5;`)}
`;

const AcroBody = styled.div`
  display: flex;
  flex: 1;
  min-height: 0;
`;

const Gutter = styled.button`
  display: flex;
  align-items: center;
  justify-content: center;
  width: 18px;
  background: #eaeaea;
  border-left: ${(p) => (p.$edge ? "1px solid #c8c8c8" : "0")};
`;

const Pages = styled.div`
  flex: 1;
  min-width: 0;
  overflow: hidden;
  background: #999;
`;

const Sheet = styled.div`
  padding: ${(p) => p.$pt}px 0 0;
  min-height: ${(p) => p.$h}px;
  margin-bottom: 7px;
  background: #fff;
  border-right: 1px solid #c8c8c8;
  font: 8px/13px ${SERIF};
  color: #000;
`;

const SheetHead = styled.header`
  height: 88px;
  padding-top: 23px;
  text-align: center;
  font-size: 9px;
  line-height: 17px;
  border-bottom: 1px solid #000;
  h1 { font-size: 9px; line-height: 17px; }
  a { display: block; color: #0000d0; }
`;

const SheetBody = styled.div`
  padding: 0 26px 0 27px;
  h2 { font-size: 8px; line-height: 16px; white-space: pre; margin-top: ${(p) => p.$top || 0}px; }
  p { line-height: 14px; text-align: justify; margin: 1px 0 4px; }
`;

const Facts = styled.table`
  width: 100%;
  height: 156px;
  border-collapse: collapse;
  margin-bottom: 14px;
  th { width: 136px; text-align: left; padding: 0; line-height: 10px; }
  td { padding: 0; line-height: 10px; white-space: pre; }
  sup { font-size: 5px; line-height: 0; }
`;

const Entries = styled.ul`
  margin: 3px 0 13px;
  li { display: grid; grid-template-columns: 11px 239px 1fr; white-space: pre; }
`;

const ScrollTrack = styled.div`
  display: flex;
  flex-direction: column;
  align-items: center;
  width: ${(p) => p.$w}px;
  flex: none;
  background: #f0f0f0;
  color: #505050;
  span { width: 15px; height: ${(p) => p.$thumb}px; background: #cdcdcd; }
  button { height: 17px; display: flex; align-items: center; }
  button:last-child { margin-top: auto; }
`;

const Panel = styled.aside`
  display: flex;
  flex-direction: column;
  width: 232px;
  flex: none;
  border-left: 1px solid #c8c8c8;
  font-size: 12px;
  line-height: 17px;
`;

const PanelSearch = styled.input`
  flex: none;
  height: 34px;
  margin: 15px;
  padding: 0 14px;
  border: 1px solid #c8c8c8;
  background: #fff;
  font-size: 12px;
  &::placeholder { color: #959595; opacity: 1; }
`;

const PanelScroll = styled.div`
  display: flex;
  height: 366px;
  border-bottom: 1px solid #c8c8c8;
`;

const PanelContent = styled.div`
  flex: 1;
  min-width: 0;
`;

const ExportRow = styled.button`
  display: flex;
  align-items: center;
  width: 100%;
  height: 42px;
  padding: 0 22px 0 27px;
  gap: 10px;
  font-size: 14px;
  border-bottom: 1px solid #c8c8c8;
  color: #4b4b4b;
`;

const ExportBody = styled.div`
  display: flex;
  flex-direction: column;
  align-items: flex-start;
  padding: 21px 14px 0 15px;
  h3 { display: flex; align-items: center; justify-content: space-between; width: 183px; font: bold 14px/18px "Liberation Sans", sans-serif; white-space: nowrap; }
  p { margin: 10px 0 19px; white-space: nowrap; }
  a { color: #14549c; text-decoration: none; }
`;

const FileBox = styled.div`
  display: flex;
  align-items: center;
  justify-content: space-between;
  width: 183px;
  height: 30px;
  margin: 7px 0 19px;
  padding: 0 6px 0 10px;
  border: 1px solid #dcdcdc;
  border-radius: 4px;
`;

const FieldLabel = styled.label`
  margin-bottom: 6px;
`;

const Language = styled.div`
  margin-top: 15px;
  line-height: 21px;
`;

const Promo = styled.div`
  display: flex;
  flex-direction: column;
  align-items: center;
  padding: 34px 4px 0 0;
  gap: 19px;
  font-size: 13px;
  line-height: 15px;
  font-weight: 600;
  text-align: center;
  button {
    width: 150px;
    height: 40px;
    border-radius: 20px;
    background: #2680eb;
    color: #fff;
    font-size: 12px;
    font-weight: 400;
  }
`;

const FACTS = [
  ["Date of Birth:", <>19<sup>th</sup>{"   May, 1995"}</>], ["Place of Birth:", "Ogwashi-Uku"],
  ["Local Govt. Area:", "  Ethiope West"], ["State of Origin:", "Delta State"], ["Sex:", "Female"],
  ["Marital Status:", "Single"], ["Nationality:", "Nigerian"], ["Religion:", "Christianity"],
];
const SCHOOLS = [
  ["Eserophe Primary School , Ughelli  Delta State", "2001 – 2006"],
  ["High Standard Comprehensive Secondary School Ughelli, Delta State", "2006 - 2013"],
  ["University of Benin. Benin City, Edo State", "2014 - 2018"],
];
const DEGREES = [
  ["First School Leaving Certificate", "  2006"],
  ["Senior Secondary Certificate Examination (SSCE)", "2013"],
  ["Bachelor of Science in Accounting (B.SC)", "2018"],
];

const EntryList = ({ rows, mark }) => (
  <Entries>
    {rows.map(([a, b]) => <li key={a}><span>{mark}</span><span>{a}</span><span>{b}</span></li>)}
  </Entries>
);

const Arrow = () => (
  <svg width="6" height="12" viewBox="0 0 6 12" fill="#6e6e6e" aria-hidden="true"><path d="M0 0l6 6-6 6z" /></svg>
);

const Acrobat = () => (
  <AcroWindow aria-label="Adobe Acrobat Reader">
    <AcroTitle>
      <AcrobatDoc />
      <span>OJIGUOR BENEDICTA OGHENEMINE.pdf - Adobe Acrobat Reader DC (32-bit)</span>
      <Spacer />
      <WindowButtons $h={30}>
        <IconButton $w={46} aria-label="Minimise"><GlyphMin color="#777" /></IconButton>
        <IconButton $w={46} aria-label="Maximise"><GlyphMax /></IconButton>
        <IconButton $w={46} aria-label="Close"><GlyphClose color="#777" /></IconButton>
      </WindowButtons>
    </AcroTitle>
    <Menu $pl={7} $gap={13} $size={12} $color="#4b4b4b" $bg="#fafafa">
      {["File", "Edit", "View", "Sign", "Window", "Help"].map((m) => <button key={m}>{m}</button>)}
    </Menu>
    <AcroTabs>
      <TabNav><button>Home</button><button>Tools</button></TabNav>
      <DocTab>OJIGUOR BENEDIC...<IconButton $w={14} aria-label="Close tab" $color="#555"><X size={11} strokeWidth={4} /></IconButton></DocTab>
      <AcroRight>
        <IconButton $color="#6e6e6e" aria-label="Help">
          <svg width="22" height="22" viewBox="0 0 22 22"><circle cx="11" cy="11" r="9.700" fill="none" stroke="currentColor" strokeWidth="1.800" /><text x="11" y="15.500" textAnchor="middle" fontSize="13" fontWeight="700" fill="currentColor">?</text></svg>
        </IconButton>
        <IconButton $color="#a5a5a5" aria-label="Notifications"><MdNotifications size={24} /></IconButton>
        <button>Sign In</button>
      </AcroRight>
    </AcroTabs>
    <AcroTools>
      <IconButton $w={44} $color="#b0b0b0" aria-label="Save">
        <svg width="20" height="20" viewBox="0 0 20 20" fill="none" stroke="currentColor" strokeWidth="2"><path d="M1 1h14l4 4v14H1zM6 1v6h8V1M5 19v-7h10v7M11 3v2" /></svg>
      </IconButton>
      <IconButton $w={44} $color="#6e6e6e" aria-label="Star"><Star size={25} strokeWidth={1.7} /></IconButton>
      <IconButton $w={44} $color="#6e6e6e" aria-label="Upload"><CloudUpload size={23} strokeWidth={2} /></IconButton>
      <IconButton $w={43} $color="#6e6e6e" aria-label="Print"><MdPrint size={26} /></IconButton>
      <IconButton $w={46} $color="#6e6e6e" aria-label="Find">
        <svg width="24" height="24" viewBox="0 0 24 24" fill="none" stroke="currentColor" strokeWidth="2"><circle cx="10" cy="10" r="8.500" /><path d="M16 16l7 7" strokeWidth="2.600" /><path d="M5.500 10h9" strokeDasharray="2 1.500" /></svg>
      </IconButton>
      <PageInput aria-label="Page" defaultValue="1" />
      /&nbsp; 2
      <Rule />
      <SelectBox $w={71} $h={27} $pl={7} $mr={7}>
        <select aria-label="Zoom"><option>41.3%</option></select>
        <svg width="8" height="5" viewBox="0 0 8 5" fill="#555"><path d="M0 0h8L4 5z" /></svg>
      </SelectBox>
      <IconButton $w={62} $color="#6e6e6e" aria-label="More">
        <svg width="19" height="5" viewBox="0 0 19 5" fill="currentColor"><circle cx="2.300" cy="2.500" r="2.200" /><circle cx="9.500" cy="2.500" r="2.200" /><circle cx="16.700" cy="2.500" r="2.200" /></svg>
      </IconButton>
      <Spacer />
      <IconButton $w={44} $color="#6e6e6e" aria-label="Share link">
        <svg width="25" height="24" viewBox="0 0 25 24" fill="none" stroke="currentColor" strokeWidth="2">
          <rect x="9" y="3" width="12" height="7" rx="3.500" transform="rotate(-48 15 6.500)" />
          <rect x="1" y="12" width="12" height="7" rx="3.500" transform="rotate(-48 7 15.500)" />
          <path d="M8 13.500l6-6" />
          <path d="M12 23q-2-4 2-4 2-4 5-1 5-1 5 5z" fill="currentColor" stroke="#fafafa" strokeWidth="1" />
        </svg>
      </IconButton>
      <IconButton $w={44} $color="#6e6e6e" aria-label="Email">
        <svg width="22" height="17" viewBox="0 0 22 17" fill="none" stroke="currentColor"><path d="M1 1h20v15H1z" strokeWidth="2" /><path d="M2 2l9 8 9-8M2 15l6.500-7M20 15l-6.500-7" strokeWidth="1.300" /></svg>
      </IconButton>
      <IconButton $w={44} $color="#6e6e6e" aria-label="Add person">
        <svg width="25" height="24" viewBox="0 0 25 24" fill="currentColor"><ellipse cx="9" cy="6" rx="4.800" ry="5.500" /><path d="M0 18q0-4 6-6h6q2 1 3 2l-3 4z" /><circle cx="18" cy="17.500" r="6.300" stroke="#fafafa" /><path d="M18 14v7M14.500 17.500h7" stroke="#fafafa" strokeWidth="1.600" /></svg>
      </IconButton>
    </AcroTools>
    <AcroBody>
      <Gutter aria-label="Show navigation"><Arrow /></Gutter>
      <Pages>
        <Sheet $pt={0} $h={500}>
          <SheetHead>
            <h1>OJIGUOR, BENEDICTA OGHENEMINE</h1>
            No 2 Segun Fagbohun Close, Boundary Majek, Ajah, Lagos.
            <a href="#mail">ogheneminebenedicta@gmail.com</a>
            08168590477, 08152676362
          </SheetHead>
          <SheetBody $top={1}>
            <h2>CAREER OBJECTIVE:</h2>
            <p>To be resourceful, productive and successful at challenging position which will enable me to contribute significantly to the growth of the company.</p>
            <h2>PERSONAL DATA:</h2>
            <Facts><tbody>{FACTS.map(([k, v]) => <tr key={k}><th scope="row">{k}</th><td>{v}</td></tr>)}</tbody></Facts>
            <h2>{"INSTITUTIONS   ATTENDED   WITH   DATE(S):"}</h2>
            <EntryList rows={SCHOOLS} mark="➢" />
            <h2>ACADEMIC QUALIFICATION WITH DATE:</h2>
            <EntryList rows={DEGREES} mark="➢" />
          </SheetBody>
        </Sheet>
        <Sheet $pt={23} $h={100}>
          <SheetBody>
            <h2>CORE SKILL AND COMPETENCIES</h2>
            <EntryList rows={[["Ms Word"], ["Ms Powerpoint"], ["Ms Excel"]]} mark="•" />
          </SheetBody>
        </Sheet>
      </Pages>
      <ScrollTrack $w={18} $thumb={319}>
        <button aria-label="Scroll up"><ChevronUp size={11} strokeWidth={4} /></button>
        <span />
        <button aria-label="Scroll down"><ChevronDown size={11} strokeWidth={4} /></button>
      </ScrollTrack>
      <Gutter $edge aria-label="Hide tools"><Arrow /></Gutter>
      <Panel>
        <PanelSearch aria-label="Search tools" placeholder="Search 'Footer'" />
        <PanelScroll>
          <PanelContent>
            <ExportRow><ExportDoc />Export PDF<Spacer /><ChevronUp size={16} strokeWidth={3} /></ExportRow>
            <ExportBody>
              <h3>Adobe Export PDF<GlobeDoc /></h3>
              <p>Convert PDF Files to Word<br />or Excel Online</p>
              <a href="#select">Select PDF File</a>
              <FileBox>OJIGUOR B...EMINE.pdf<IconButton $w={14} $color="#888" aria-label="Remove file"><X size={16} strokeWidth={2.5} /></IconButton></FileBox>
              <FieldLabel htmlFor="format">Convert to</FieldLabel>
              <SelectBox $w={185} $h={30} $pl={10} $mr={11} $boxed>
                <select id="format"><option>Microsoft Word (*.docx)</option></select>
                <ChevronDown size={14} strokeWidth={3} color="#888" />
              </SelectBox>
              <Language>Document Language:<br />English (U.S.)&nbsp; <a href="#language">Change</a></Language>
            </ExportBody>
          </PanelContent>
          <ScrollTrack $w={17} $thumb={123}>
            <button aria-label="Scroll up"><ChevronUp size={11} strokeWidth={4} /></button>
            <span />
            <button aria-label="Scroll down"><ChevronDown size={11} strokeWidth={4} /></button>
          </ScrollTrack>
        </PanelScroll>
        <Promo>
          <div>Convert, edit and e-sign PDF<br />forms &amp; agreements</div>
          <button>Free 7-Day Trial</button>
        </Promo>
      </Panel>
    </AcroBody>
  </AcroWindow>
);

const VlcWindow = () => (
  <>
    <VlcTitle>
      <Cone w={14} h={16} />
      VLC media player
      <Spacer />
      <WindowButtons $h={24}>
        <IconButton $w={46} $h={20} aria-label="Minimise"><GlyphMin color="#888" /></IconButton>
        <IconButton $w={46} $h={20} aria-label="Restore"><GlyphRestore color="#888" /></IconButton>
        <IconButton $w={46} $h={20} aria-label="Close"><GlyphClose color="#888" /></IconButton>
      </WindowButtons>
    </VlcTitle>
    <Menu $pl={8} $gap={17} $size={11} $color="#999" $bg="#fff">
      {["Media", "Playback", "Audio", "Video", "Subtitle", "Tools", "View", "Help"].map((m) => <button key={m}>{m}</button>)}
    </Menu>
    <Video>
      <Cone w={110} h={124} />
      <Acrobat />
    </Video>
    <Controls>
      <SeekRow>
        <span>--:--</span>
        <input type="range" aria-label="Seek" defaultValue="0" />
        <span>--:--</span>
      </SeekRow>
      <ControlRow>
        <PlayerButton $big aria-label="Play"><Glyph s={20} d="M2.500 1L13 8 2.500 15z" /></PlayerButton>
        <Row $gap={2}>
          <PlayerButton aria-label="Previous"><Glyph d="M0 3h2v10H0zM8.500 3v10L2.500 8zM15.500 3v10L9 8z" /></PlayerButton>
          <PlayerButton aria-label="Stop"><Glyph d="M3 3h10v10H3z" /></PlayerButton>
          <PlayerButton aria-label="Next"><Glyph d="M14 3h2v10h-2zM7.500 3v10l6-5zM.5 3v10L7 8z" /></PlayerButton>
        </Row>
        <Row $gap={2}>
          <PlayerButton $off aria-label="Full screen"><Glyph stroke d="M1 5V2h4M11 2h4v3M15 11v3h-4M5 14H1v-3" /></PlayerButton>
          <PlayerButton aria-label="Effects"><Glyph stroke d="M3 2v12M8 2v12M13 2v12M.5 5h5M5.500 10h5M10.500 9h5" /></PlayerButton>
        </Row>
        <Row $gap={2}>
          <PlayerButton aria-label="Playlist"><Glyph stroke d="M1 3h14M1 8h14M1 13h8M11 13h3" /></PlayerButton>
          <PlayerButton aria-label="Loop"><Glyph stroke d="M2 7V4h10M14 9v3H4M11 1l3 3-3 2M5 15l-3-3 3-2" /></PlayerButton>
          <PlayerButton aria-label="Shuffle"><Glyph stroke d="M2 3l3 1 7 9h2M2 13l3-1 7-9h2M11 2h3v3M11 14h3v-3" /></PlayerButton>
        </Row>
        <Spacer />
        <Row $gap={6}>
          <button aria-label="Mute">
            <svg width="15" height="14" viewBox="0 0 15 14" fill="none" aria-hidden="true"><path d="M0 4h2.500L6 1v12L2.500 10H0z" fill="#777" /><path d="M8 4.500q1.500 2.500 0 5M10.300 3q2.500 4 0 8M12.500 1.500q3 5.500 0 11" stroke="#f39a2b" strokeWidth="1.500" /></svg>
          </button>
          <VolumeBox>
            <svg width="74" height="22" viewBox="0 0 74 22" aria-hidden="true">
              <defs><linearGradient id="vol"><stop offset="0" stopColor="#7cc77c" /><stop offset=".6" stopColor="#2fd02f" /><stop offset="1" stopColor="#1bd21b" /></linearGradient></defs>
              <path d="M1 20L59 5v16H1z" fill="url(#vol)" />
              <path d="M57 5.500l2.500-.7V21H57z" fill="#b9c81a" />
              <path d="M1.500 19L71 1q2-.5 2 1.500V19q0 2-2 2H2q-2-1-.5-2z" fill="none" stroke="#777" strokeWidth="1.600" />
            </svg>
            <span>100%</span>
            <input type="range" aria-label="Volume" defaultValue="80" />
          </VolumeBox>
        </Row>
      </ControlRow>
    </Controls>
  </>
);

export default function App() {
  return (
    <>
      <GlobalStyle />
      <Desktop>
        <Monitor $ratio="1360 / 768">
          <ChromeWindow />
          <Bar>
            <Tile $w={48} aria-label="Start"><WindowsLogo /></Tile>
            <TaskSearch><Magnifier /><input aria-label="Search" placeholder="Type here to search" /></TaskSearch>
            <Tile $w={48} aria-label="Cortana"><Cortana /></Tile>
            <Tile $w={48} aria-label="Task view"><TaskView /></Tile>
            <AppTiles width={44} pad={1} />
            <Spacer />
            <Weather><MoonCloud />23°C</Weather>
            <TrayStroke label="Hidden icons" d="M3 10.500l5-5 5 5" />
            <TrayStroke label="Meet now" d="M3 5h8v7H3zM11 8l2-1.500v4L11 9M5 2q3-2 6 0M5 14.500q3 2 6 0" />
            <TrayStroke label="Battery" d="M5 5h9v7H5zM7 7v3h5V7zM7 8.500h5M1 3v3q0 2 2 2t2-2V3M2 1v2M4 1v2M3 8v3h2M15 7v3" />
            <TrayStroke label="Network" d="M2 14Q2 3 14 2M5 14Q5 6.500 14 5.500M8 14q0-5 6-5.500M11 14q0-2 3-2.500" />
            <TrayStroke label="Volume" d="M1 6h2l3-3v10L3 10H1zM8 6q1.500 2 0 4M10.500 4.500q2.500 3.500 0 7M13 3q3 5 0 10" />
            <Clock $w={60}>2:05 am<br />10/08/2021</Clock>
            <IconButton $w={56} $h={40} $color="#fff" aria-label="Notifications">
              <svg width="17" height="17" viewBox="0 0 17 17" fill="none" stroke="currentColor" strokeWidth="1.200"><path d="M1 1h15v11h-5l-2.500 3.500L6.500 12H1z" /></svg>
            </IconButton>
            <ShowDesktop aria-label="Show desktop" />
          </Bar>
        </Monitor>
        <Monitor $ratio="1680 / 1050">
          <VlcWindow />
          <Bar>
            <Tile $w={48} aria-label="Start"><WindowsLogo /></Tile>
            <Tile $w={48} aria-label="Search"><Magnifier color="#fff" /></Tile>
            <Tile $w={48} aria-label="Cortana"><Cortana /></Tile>
            <Tile $w={48} aria-label="Task view"><TaskView /></Tile>
            <AppTiles width={49} pad={2} />
            <Spacer />
            <Clock $w={72}>2:05 am<br />10/08/2021</Clock>
          </Bar>
        </Monitor>
      </Desktop>
    </>
  );
}
